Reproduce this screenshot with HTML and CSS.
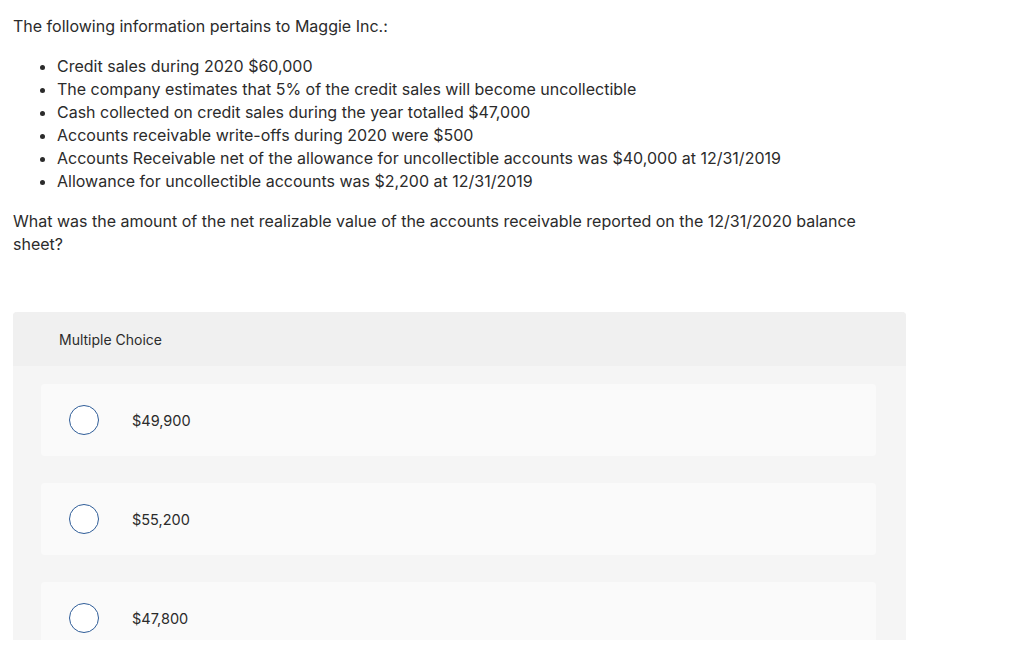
FILE: index.html
```html
<!DOCTYPE html>
<html>
<head>
<meta charset="utf-8">
<link rel="stylesheet" href="styles.css">
</head>
<body>
<div class="page">
  <p class="intro">The following information pertains to Maggie Inc.:</p>
  <ul class="facts">
    <li>Credit sales during 2020 $60,000</li>
    <li>The company estimates that 5% of the credit sales will become uncollectible</li>
    <li>Cash collected on credit sales during the year totalled $47,000</li>
    <li>Accounts receivable write-offs during 2020 were $500</li>
    <li>Accounts Receivable net of the allowance for uncollectible accounts was $40,000 at 12/31/2019</li>
    <li>Allowance for uncollectible accounts was $2,200 at 12/31/2019</li>
  </ul>
  <p class="question">What was the amount of the net realizable value of the accounts receivable reported on the 12/31/2020 balance sheet?</p>
  <div class="panel">
    <div class="panel-head">Multiple Choice</div>
    <div class="panel-body">
      <div class="option"><span class="radio"></span><span class="label">$49,900</span></div>
      <div class="option"><span class="radio"></span><span class="label">$55,200</span></div>
      <div class="option"><span class="radio"></span><span class="label">$47,800</span></div>
    </div>
  </div>
</div>
</body>
</html>
```
FILE: styles.css
```css
html, body {
  margin: 0;
  padding: 0;
  background: #ffffff;
}
body {
  font-family: Inter, "Liberation Sans", Arial, sans-serif;
  color: #2b2b2b;
  font-size: 16px;
  line-height: 23px;
}
.page {
  padding: 15px 13px 0 13px;
  height: 625px;
  overflow: hidden;
}
.intro {
  margin: 0 0 17px 0;
}
.facts {
  margin: 0 0 17px 0;
  padding-left: 44px;
}
.question {
  margin: 0;
  width: 870px;
}
.panel {
  margin-top: 56px;
  width: 893px;
  background: #f5f5f5;
  border-radius: 4px 4px 0 0;
}
.panel-head {
  height: 54px;
  background: #f0f0f0;
  border-radius: 4px 4px 0 0;
  display: flex;
  align-items: center;
  padding-left: 46px;
  font-size: 14px;
}
.panel-body {
  padding: 18px 30px 0 28px;
  display: flex;
  flex-direction: column;
  gap: 27px;
}
.option {
  height: 72px;
  background: #fafafa;
  border-radius: 4px;
  display: flex;
  align-items: center;
  padding-left: 28px;
  font-size: 14.5px;
}
.radio {
  width: 28px;
  height: 28px;
  border: 1px solid #2f5d98;
  border-radius: 50%;
  background: #ffffff;
  flex: none;
}
.label {
  margin-left: 33px;
}
```
